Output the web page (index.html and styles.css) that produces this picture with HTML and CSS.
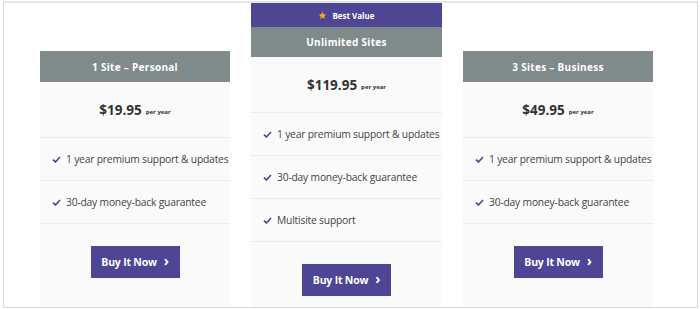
FILE: index.html
```html
<!DOCTYPE html>
<html>
<head>
<meta charset="utf-8">
<link rel="stylesheet" href="styles.css">
</head>
<body>
<div class="frame">
  <div class="cards">
    <div class="card side">
      <div class="head">1 Site – Personal</div>
      <div class="price"><span class="amt">$19.95</span><span class="per">per year</span></div>
      <ul class="feats">
        <li><svg class="chk" viewBox="0 0 10 8"><path d="M1 4.2 L3.8 6.8 L9 1.2" fill="none" stroke="#4e4595" stroke-width="1.9"/></svg>1 year premium support &amp; updates</li>
        <li><svg class="chk" viewBox="0 0 10 8"><path d="M1 4.2 L3.8 6.8 L9 1.2" fill="none" stroke="#4e4595" stroke-width="1.9"/></svg>30-day money-back guarantee</li>
      </ul>
      <div class="btnwrap"><a class="btn">Buy It Now <span class="chev">›</span></a></div>
    </div>
    <div class="card mid">
      <div class="best"><svg class="star" viewBox="0 0 24 24"><path d="M12 1.5 L15 8.4 L22.5 9.1 L16.8 14.1 L18.5 21.5 L12 17.6 L5.5 21.5 L7.2 14.1 L1.5 9.1 L9 8.4 Z" fill="#f5a623"/></svg>Best Value</div>
      <div class="head">Unlimited Sites</div>
      <div class="price"><span class="amt">$119.95</span><span class="per">per year</span></div>
      <ul class="feats">
        <li><svg class="chk" viewBox="0 0 10 8"><path d="M1 4.2 L3.8 6.8 L9 1.2" fill="none" stroke="#4e4595" stroke-width="1.9"/></svg>1 year premium support &amp; updates</li>
        <li><svg class="chk" viewBox="0 0 10 8"><path d="M1 4.2 L3.8 6.8 L9 1.2" fill="none" stroke="#4e4595" stroke-width="1.9"/></svg>30-day money-back guarantee</li>
        <li><svg class="chk" viewBox="0 0 10 8"><path d="M1 4.2 L3.8 6.8 L9 1.2" fill="none" stroke="#4e4595" stroke-width="1.9"/></svg>Multisite support</li>
      </ul>
      <div class="btnwrap"><a class="btn">Buy It Now <span class="chev">›</span></a></div>
    </div>
    <div class="card side">
      <div class="head">3 Sites – Business</div>
      <div class="price"><span class="amt">$49.95</span><span class="per">per year</span></div>
      <ul class="feats">
        <li><svg class="chk" viewBox="0 0 10 8"><path d="M1 4.2 L3.8 6.8 L9 1.2" fill="none" stroke="#4e4595" stroke-width="1.9"/></svg>1 year premium support &amp; updates</li>
        <li><svg class="chk" viewBox="0 0 10 8"><path d="M1 4.2 L3.8 6.8 L9 1.2" fill="none" stroke="#4e4595" stroke-width="1.9"/></svg>30-day money-back guarantee</li>
      </ul>
      <div class="btnwrap"><a class="btn">Buy It Now <span class="chev">›</span></a></div>
    </div>
  </div>
</div>
</body>
</html>
```
FILE: styles.css
```css
* { box-sizing: border-box; }
html, body { margin: 0; padding: 0; background: #fff; }
body { font-family: "Open Sans", "Noto Sans", sans-serif; }
.frame {
  margin: 1px 0 0 3px;
  width: 695px;
  height: 307px;
  border: 1px solid #d9d9d9;
  border-top: 2px solid #e6e6e6;
  padding-left: 36px;
  overflow: hidden;
}
.cards { display: flex; gap: 21px; align-items: flex-start; }
.card { width: 190px; background: #fafafa; height: 400px; }
.card.mid { width: 191px; }
.card.side { margin-top: 48px; }
.best {
  height: 24px;
  background: #4e4595;
  color: #fff;
  font-size: 8px;
  font-weight: 700;
  display: flex;
  align-items: center;
  justify-content: center;
  gap: 5px;
}
.star { width: 9px; height: 9px; flex-shrink: 0; }
.head {
  height: 31px;
  background: #7f8b8a;
  color: #fff;
  font-size: 10px;
  font-weight: 700;
  letter-spacing: 0.3px;
  display: flex;
  align-items: center;
  justify-content: center;
}
.mid .head { height: 30px; }
.price {
  height: 56px;
  border-bottom: 1px solid #ececec;
  display: flex;
  align-items: center;
  justify-content: center;
  color: #333;
}
.amt { font-size: 13.5px; font-weight: 700; }
.per { font-size: 6px; font-weight: 700; margin-left: 4px; margin-top: 4px; }
.feats { list-style: none; margin: 0; padding: 0; }
.feats li {
  height: 43px;
  border-bottom: 1px solid #ececec;
  display: flex;
  align-items: center;
  padding-left: 12px;
  font-size: 10.3px;
  letter-spacing: -0.2px;
  color: #444;
  white-space: nowrap;
}
.chk { width: 9px; height: 7px; margin-right: 5px; flex-shrink: 0; }
.btnwrap { display: flex; justify-content: center; padding-top: 22px; }
.btn {
  width: 89px;
  height: 32px;
  background: #4e4595;
  color: #fff;
  font-size: 10.5px;
  font-weight: 700;
  letter-spacing: -0.2px;
  display: flex;
  align-items: center;
  justify-content: center;
  gap: 7px;
}
.chev { font-size: 14px; line-height: 1; margin-top: -2px; }
```
